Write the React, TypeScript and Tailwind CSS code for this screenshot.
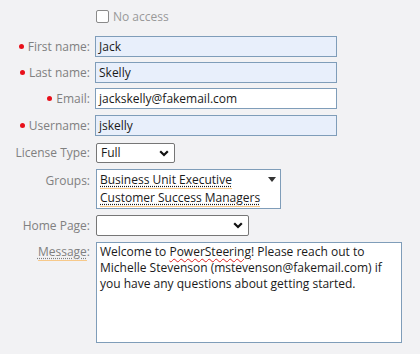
import React from 'react';

const font = { fontFamily: '"Open Sans", "Noto Sans", sans-serif' };

function Dot() {
  return <span className="inline-block w-[5px] h-[5px] rounded-full bg-[#e8101a] mr-[4px] mb-[2px]" />;
}

function Label({ text, required, className = '' }: { text: string; required?: boolean; className?: string }) {
  return (
    <div className={`w-[90px] shrink-0 text-right text-[#808080] leading-none ${className}`}>
      {required && <Dot />}
      {text}
    </div>
  );
}

function Chevron() {
  return (
    <svg width="10" height="7" viewBox="0 0 10 7" className="text-[#111]">
      <path d="M1.2 1.2 L5 5 L8.8 1.2" fill="none" stroke="currentColor" strokeWidth="2.2" />
    </svg>
  );
}

function Field({ value, filled }: { value: string; filled?: boolean }) {
  return (
    <div
      className={`w-[242px] h-[21px] border border-[#7f9db9] px-[3px] flex items-center text-[#1a1a1a] ${
        filled ? 'bg-[#e8effb]' : 'bg-white'
      }`}
    >
      {value}
    </div>
  );
}

export default function App() {
  return (
    <div className="w-[420px] h-[354px] bg-[#f2f2f4] text-[12px] overflow-hidden" style={font}>
      <div className="flex flex-col pt-[10px]">
        <div className="flex items-center h-[13px]">
          <div className="w-[96px] shrink-0" />
          <div className="w-[13px] h-[13px] border border-[#8a8a8a] rounded-[2px] bg-white" />
          <span className="ml-[4px] text-[#999]">No access</span>
        </div>

        <div className="flex items-center gap-[5px] mt-[13px]">
          <Label text="First name:" required />
          <Field value="Jack" filled />
        </div>
        <div className="flex items-center gap-[5px] mt-[5px]">
          <Label text="Last name:" required />
          <Field value="Skelly" filled />
        </div>
        <div className="flex items-center gap-[5px] mt-[5px]">
          <Label text="Email:" required />
          <Field value="jackskelly@fakemail.com" />
        </div>
        <div className="flex items-center gap-[5px] mt-[6px]">
          <Label text="Username:" required />
          <Field value="jskelly" filled />
        </div>

        <div className="flex items-center gap-[6px] mt-[7px]">
          <Label text="License Type:" />
          <div className="w-[79px] h-[20px] border border-[#767676] rounded-[2px] bg-white flex items-center justify-between pl-[4px] pr-[5px] text-[#1a1a1a]">
            <span>Full</span>
            <Chevron />
          </div>
        </div>

        <div className="flex items-start gap-[6px] mt-[6px]">
          <Label text="Groups:" className="pt-[6px]" />
          <div className="relative w-[185px] h-[40px] border border-[#7f9db9] bg-white px-[3px] pt-[1px] text-[#1a1a1a] leading-[18px]">
            <div>
              <span className="underline decoration-dotted underline-offset-[2px] border-b border-[#f7c98a]">Business Unit Executive</span>
            </div>
            <div>
              <span className="underline decoration-dotted underline-offset-[2px] border-b border-[#f7c98a]">Customer Success Managers</span>
            </div>
            <svg width="8" height="5" viewBox="0 0 8 5" className="absolute right-[4px] top-[7px]">
              <path d="M0 0 H8 L4 5 Z" fill="#333" />
            </svg>
          </div>
        </div>

        <div className="flex items-center gap-[6px] mt-[6px]">
          <Label text="Home Page:" />
          <div className="w-[153px] h-[21px] border border-[#767676] rounded-[2px] bg-white flex items-center justify-end pr-[5px]">
            <Chevron />
          </div>
        </div>

        <div className="flex items-start gap-[6px] mt-[6px]">
          <div className="w-[90px] shrink-0 text-right text-[#808080] leading-none pt-[4px]">
            <span className="underline decoration-dotted underline-offset-[2px] border-b border-[#f7c98a]">Message</span>:
          </div>
          <div className="w-[306px] h-[101px] border border-[#7f9db9] bg-white px-[3px] pt-[1px] text-[#1a1a1a] leading-[16px]">
            Welcome to{' '}
            <span className="underline decoration-wavy decoration-[#e02020] decoration-[1px] underline-offset-[2px]">PowerSteering</span>! Please reach out to Michelle Stevenson (mstevenson@fakemail.com) if you have any questions about getting started.
          </div>
        </div>
      </div>
    </div>
  );
}
